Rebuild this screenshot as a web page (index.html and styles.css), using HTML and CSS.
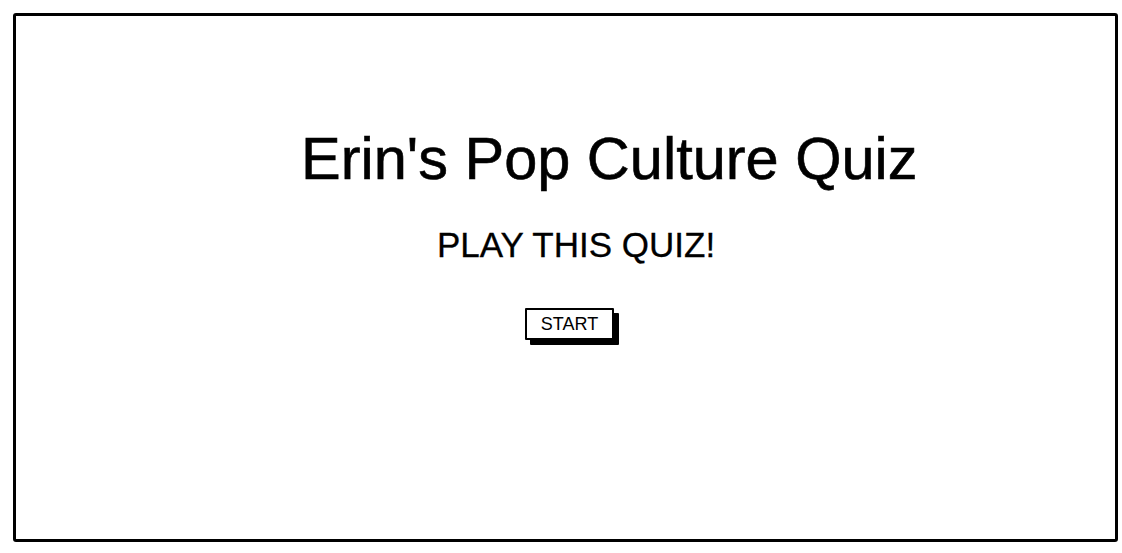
FILE: index.html
```html
<!DOCTYPE html>
<html>
<head>
<meta charset="utf-8">
<link rel="stylesheet" href="styles.css">
</head>
<body>
<div class="frame">
  <h1 class="title">Erin's Pop Culture Quiz</h1>
  <p class="subtitle">PLAY THIS QUIZ!</p>
  <button class="start">START</button>
</div>
</body>
</html>
```

FILE: styles.css
```css
html, body {
  margin: 0;
  padding: 0;
  background: #fff;
}
body {
  font-family: "Liberation Sans", Arial, sans-serif;
  color: #000;
}
.frame {
  box-sizing: border-box;
  margin: 13px 0 0 13px;
  width: 1105px;
  height: 529px;
  border: 3px solid #000;
  border-radius: 3px;
  display: flex;
  flex-direction: column;
  align-items: flex-start;
}
.title {
  margin: 113px 0 0 285px;
  font-size: 59.5px;
  font-weight: normal;
  line-height: 1;
  -webkit-text-stroke: 0.6px #000;
}
.subtitle {
  margin: 38px 0 0 421px;
  font-size: 35px;
  line-height: 1;
  -webkit-text-stroke: 0.3px #000;
}
.start {
  margin: 46px 0 0 509px;
  box-sizing: border-box;
  width: 89px;
  height: 32px;
  padding: 0;
  border: 2px solid #000;
  border-radius: 1px;
  background: #fff;
  box-shadow: 5px 5px 0 #000;
  font-family: "Liberation Sans", Arial, sans-serif;
  font-size: 18px;
  line-height: 1;
  color: #000;
}
```
